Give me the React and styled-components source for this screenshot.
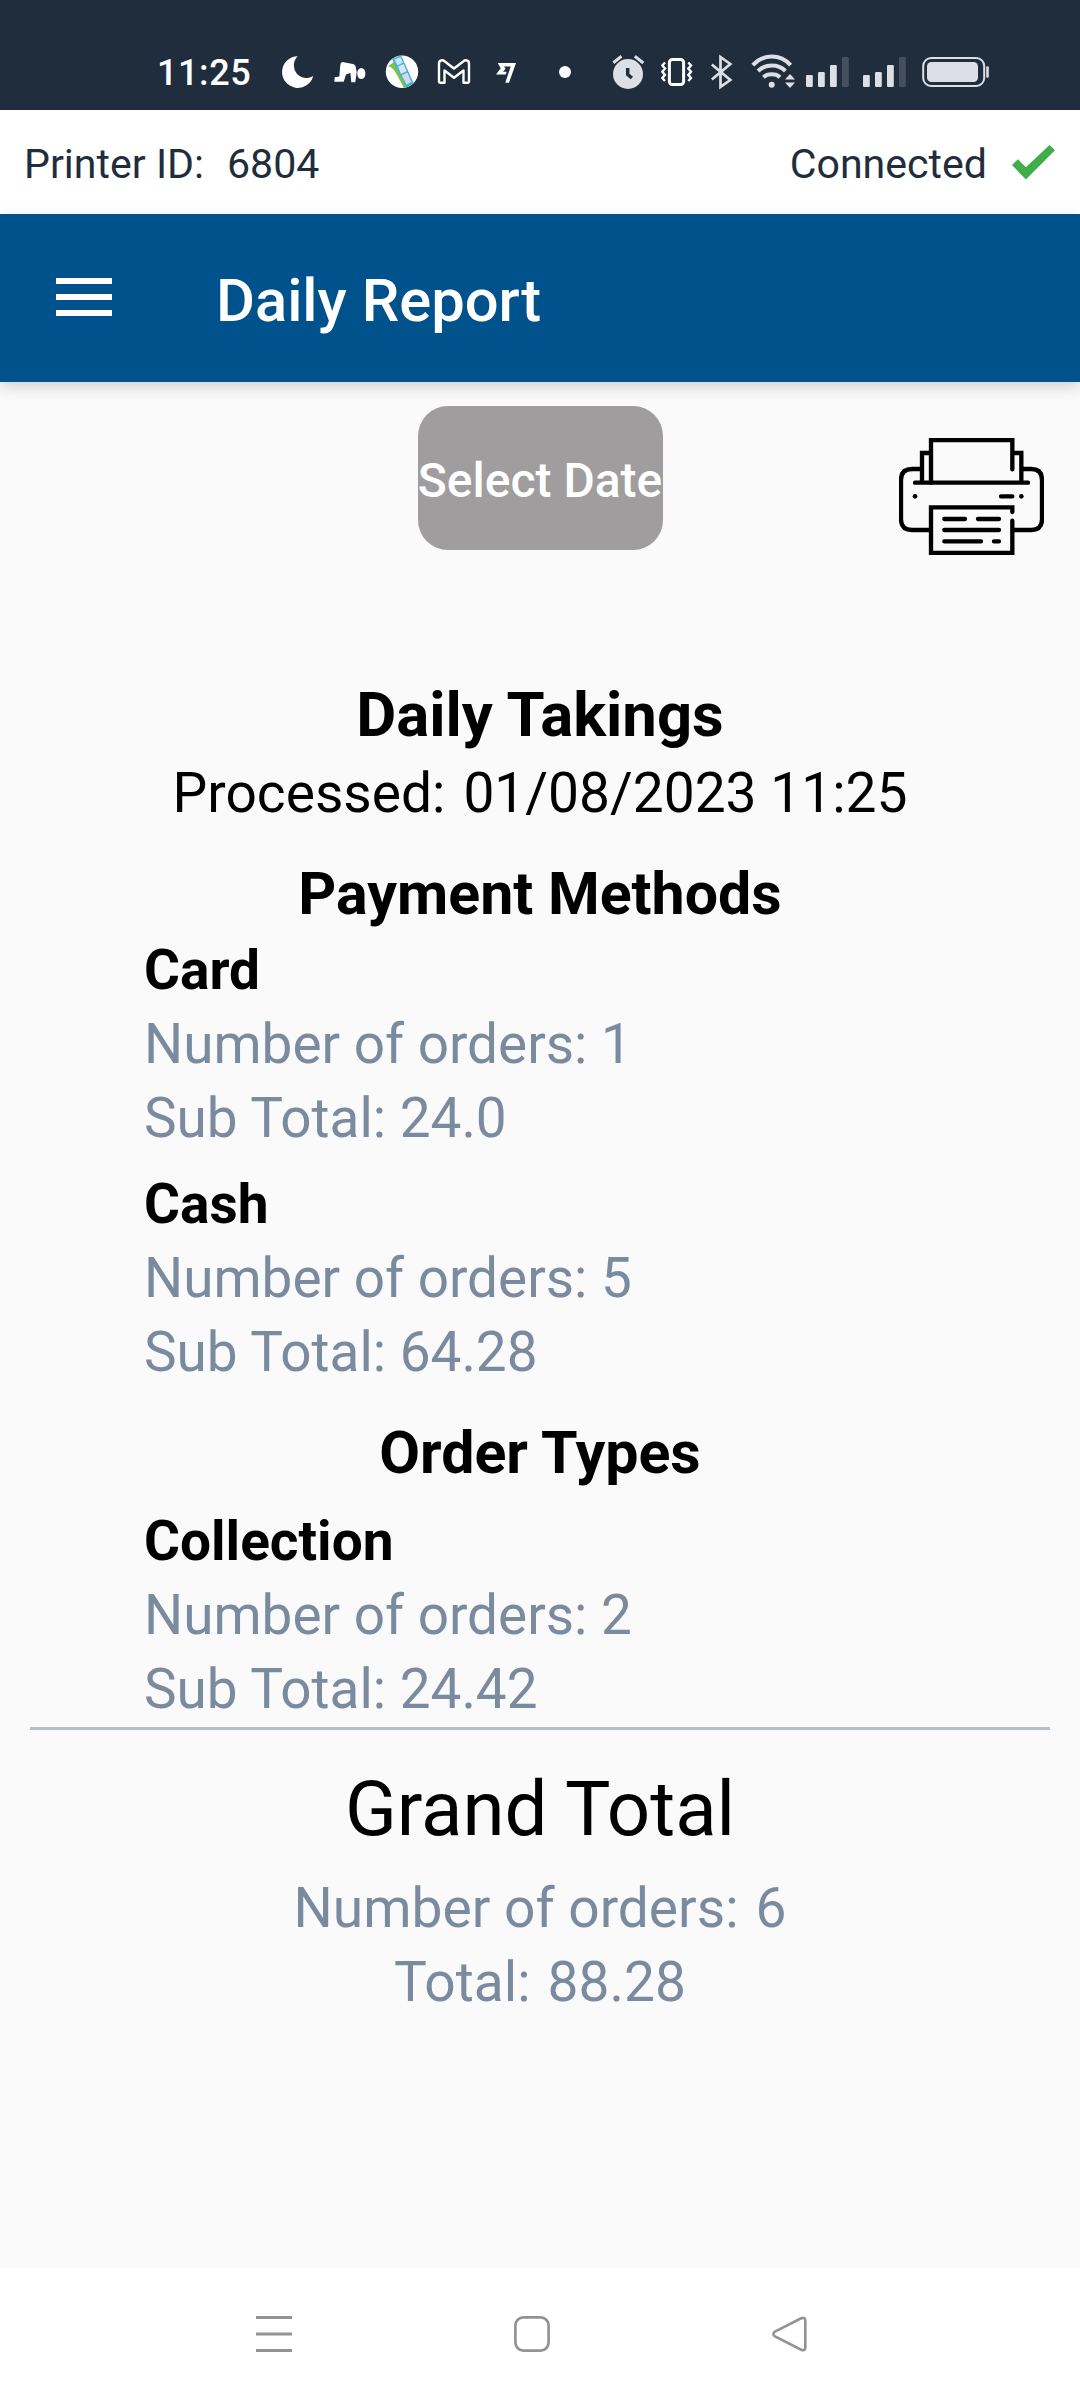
import styled, { createGlobalStyle } from 'styled-components';

const payments = [
  { name: 'Card', orders: '1', total: '24.0' },
  { name: 'Cash', orders: '5', total: '64.28' },
];

const orderTypes = [{ name: 'Collection', orders: '2', total: '24.42' }];

const Signal = ({ gap }) => (
  <StatusIcon $gap={gap} width="43" height="40" viewBox="0 0 43 40" fill="#dcdfe5">
    <rect x="0" y="23" width="6.8" height="12" rx="1.2" />
    <rect x="12" y="20" width="6.8" height="15" rx="1.2" />
    <rect x="24" y="13" width="6.8" height="22" rx="1.2" />
    <rect x="36" y="5" width="6.8" height="30" rx="1.2" fill="#454f60" />
  </StatusIcon>
);

const StatusBar = () => (
  <Status>
    <Clock>11:25</Clock>
    <StatusIcon width="32" height="40" viewBox="0 0 32 40" fill="#fff">
      <path d="M15.7 4.3A15.8 15.8 0 1 0 31.2 24A12.6 12.6 0 0 1 15.7 4.3Z" />
    </StatusIcon>
    <StatusIcon $gap={20} width="32" height="40" viewBox="0 0 32 40" fill="#fff">
      <path d="M8.3 10Q6.6 10.6 6.3 13L5.3 24.5L.7 25.3L.3 29.8H9.7L12 22.5L16.4 21L17.3 30.3H21.3L22.7 19.7L21.5 14Q20.7 12.3 19 12Z" />
      <ellipse cx="27.3" cy="21.5" rx="4.1" ry="5.6" />
    </StatusIcon>
    <StatusIcon $gap={19} width="34" height="40" viewBox="0 0 34 40">
      <defs>
        <clipPath id="map">
          <circle cx="17" cy="19.7" r="16.2" />
        </clipPath>
      </defs>
      <circle cx="17" cy="19.7" r="16.2" fill="#fff" />
      <g clipPath="url(#map)">
        <path d="M3 14L9 10L24 36H19L12 23Q8 15 3 14Z" fill="#7cc342" />
        <path d="M7 7L16 3L29 32L21 35Z" fill="#3fb2dd" />
        <path d="M9.5 7.5L15.5 5L18 10.5L12.5 13.5Z" fill="#c9e6f2" />
        <path d="M13 14.5L18.5 12L21.8 19L16 22Z" fill="#dfe5ec" />
        <path d="M16.7 23.3L22.4 20.5L26.5 30L21.5 32.5Z" fill="#d3dbe4" />
      </g>
    </StatusIcon>
    <StatusIcon $gap={18} width="34" height="40" viewBox="0 0 34 40" fill="none" stroke="#fff" strokeWidth="2.4" strokeLinejoin="round">
      <path d="M3.5 30.8H7.5V18.5L17 25.7L26.5 18.5V30.8H30.5Q32 30.8 32 29.3V11.5Q32 8.5 29 8.3Q27.7 8.2 26.5 9.2L17 16.5L7.5 9.2Q6.3 8.2 5 8.3Q2 8.5 2 11.5V29.3Q2 30.8 3.5 30.8Z" />
    </StatusIcon>
    <StatusIcon $gap={25} width="21" height="40" viewBox="0 0 21 40" fill="#fff">
      <path d="M1.7 11H20L13 30.7H9.3L14.7 14.5H8L9.6 16.7L7 19.7H10.7L9.7 22.5H0L4.7 16.3Z" />
    </StatusIcon>
    <StatusIcon $gap={42} width="12" height="40" viewBox="0 0 12 40" fill="#fff">
      <circle cx="6" cy="20" r="6" />
    </StatusIcon>
    <StatusIcon $gap={41} width="33" height="40" viewBox="0 0 33 40" fill="none" strokeWidth="3">
      <circle cx="16" cy="22" r="15" fill="#dcdfe5" />
      <path d="M1.3 10.7L9.5 4.3M22.8 4.3L31.3 11" stroke="#dcdfe5" />
      <path d="M15.7 16V22.5L19.9 26" stroke="#1f2d3d" strokeWidth="3.5" />
    </StatusIcon>
    <StatusIcon $gap={16} width="32" height="40" viewBox="0 0 32 40" fill="none" stroke="#fff" strokeWidth="2.4">
      <rect x="8.4" y="7.4" width="14.2" height="25.2" rx="3" strokeWidth="3" />
      <path d="M4 10.5L1.3 13.5L4 16.5L1.3 19.7L4 22.9L1.3 26L4 29M27.3 10.5L30 13.5L27.3 16.5L30 19.7L27.3 22.9L30 26L27.3 29" />
    </StatusIcon>
    <StatusIcon $gap={18} width="22" height="40" viewBox="0 0 22 40" fill="none" stroke="#dcdfe5" strokeWidth="2.7">
      <path d="M.8 12.5L19.3 28L9.5 34.8V5L19.3 12L.8 27.5" />
    </StatusIcon>
    <StatusIcon $gap={18} width="45" height="40" viewBox="0 0 45 40" fill="none" stroke="#dcdfe5" strokeWidth="4">
      <path d="M1.8 13.2Q9.5 4.6 20.7 4.6T39.6 13.2M7 19Q12.5 13.6 20.7 13.6T34.4 19M12.4 25.2Q15.5 22.3 20.7 22.3T29 25.2" />
      <circle cx="20.7" cy="32.7" r="3" fill="#dcdfe5" stroke="none" />
      <path d="M34 27.5L39 22L44 27.5ZM34 30.4H44L39 36Z" fill="#dcdfe5" stroke="none" />
    </StatusIcon>
    <Signal gap={10} />
    <Signal gap={14} />
    <StatusIcon $gap={16} width="68" height="40" viewBox="0 0 68 40" fill="#dcdfe5">
      <rect x="1.2" y="6" width="61" height="28" rx="8" fill="none" stroke="#dcdfe5" strokeWidth="2" />
      <rect x="5" y="10" width="51" height="20" rx="4.5" />
      <rect x="64.2" y="14.3" width="2.6" height="11.4" rx="1" />
    </StatusIcon>
  </Status>
);

const Entry = ({ name, orders, total }) => (
  <EntryBlock>
    <EntryName>{name}</EntryName>
    <Detail>Number of orders: {orders}</Detail>
    <Detail>Sub Total: {total}</Detail>
  </EntryBlock>
);

const App = () => {
  return (
    <Screen>
      <GlobalStyle />
      <StatusBar />
      <PrinterBar>
        <PrinterId>
          <span>Printer ID:</span>
          <span>6804</span>
        </PrinterId>
        <Connection>
          <span>Connected</span>
          <svg width="43" height="35" viewBox="0 0 43 35" fill="#3fae49">
            <path d="M0 20L5.9 14.3L13.9 22.2L37.5 0L43 5.3L13.9 34.4Z" />
          </svg>
        </Connection>
      </PrinterBar>
      <AppBar>
        <MenuButton aria-label="Menu">
          <svg width="56" height="38" viewBox="0 0 56 38" fill="#fff">
            <path d="M0 0H56V6H0ZM0 16H56V22H0ZM0 32H56V38H0Z" />
          </svg>
        </MenuButton>
        <Title>Daily Report</Title>
      </AppBar>
      <Content>
        <Actions>
          <SelectDate>Select Date</SelectDate>
          <PrintButton aria-label="Print">
            <svg width="145" height="117" viewBox="27 24 435 351" fill="none" stroke="#000" strokeWidth="13" strokeLinecap="round">
              <path d="M123 158V30H367V118" />
              <path d="M96 156V69H120M370 69H394V156" />
              <path d="M75 158H414" />
              <path d="M94 117H66Q33 117 33 150V268Q33 300 66 300H120M397 117H424Q456 117 456 150V268Q456 300 424 300H370" />
              <path d="M367 246V232H123V369H367V272" />
              <path d="M333 199H367M163 267H225M264 267H327M163 300H327M163 334H273M312 334H327" />
              <circle cx="75" cy="199" r="7" fill="#000" stroke="none" />
              <circle cx="394" cy="199" r="7" fill="#000" stroke="none" />
            </svg>
          </PrintButton>
        </Actions>
        <ReportTitle>Daily Takings</ReportTitle>
        <Processed>
          <span>Processed:</span>
          <span>01/08/2023 11:25</span>
        </Processed>
        <SectionTitle>Payment Methods</SectionTitle>
        <Entries $top={-1}>
          {payments.map((p) => (
            <Entry key={p.name} {...p} />
          ))}
        </Entries>
        <SectionTitle>Order Types</SectionTitle>
        <Entries $top={11}>
          {orderTypes.map((o) => (
            <Entry key={o.name} {...o} />
          ))}
        </Entries>
        <Divider />
        <GrandTotal>Grand Total</GrandTotal>
        <Summary>
          <span>Number of orders:</span>
          <span>6</span>
        </Summary>
        <Summary>
          <span>Total:</span>
          <span>88.28</span>
        </Summary>
      </Content>
      <NavBar>
        <svg width="36" height="36" viewBox="0 0 36 36" stroke="#939393" strokeWidth="3">
          <path d="M0 1.5H36M0 18H36M0 34.5H36" />
        </svg>
        <svg width="36" height="36" viewBox="0 0 36 36" fill="none" stroke="#939393" strokeWidth="2.7">
          <rect x="1.4" y="1.4" width="33.2" height="33.2" rx="8" />
        </svg>
        <svg width="36" height="36" viewBox="0 0 36 36" fill="none" stroke="#939393" strokeWidth="2.6">
          <path d="M2.5 15.9L29.2 2.3Q33.3 .8 33.3 4.5V31.5Q33.3 35.2 29.2 33.7L2.5 20.1Q.3 18 2.5 15.9Z" />
        </svg>
      </NavBar>
    </Screen>
  );
};

const GlobalStyle = createGlobalStyle`
* {
  box-sizing: border-box;
}

body {
  margin: 0;
  font-family: Roboto, sans-serif;
}

h1, h2, h3, p {
  margin: 0;
}

svg {
  display: block;
  flex-shrink: 0;
}

button {
  font-family: inherit;
  border: 0;
  padding: 0;
  background: none;
}
`;

const Screen = styled.div`
display: flex;
flex-direction: column;
width: 1080px;
height: 2400px;
background-color: #fafafa;
`;

const Status = styled.header`
display: flex;
height: 110px;
padding: 52px 0 0 156px;
background-color: #1f2d3d;
`;

const Clock = styled.span`
width: 126px;
padding-left: 1px;
font-size: 36px;
font-weight: 500;
line-height: 43px;
letter-spacing: 0.6px;
color: #fff;
`;

const StatusIcon = styled.svg`
margin-left: ${(props) => props.$gap || 0}px;
`;

const PrinterBar = styled.div`
display: flex;
justify-content: space-between;
height: 104px;
padding: 0 25px 0 24px;
background-color: #fff;
color: #1f2d3d;
font-size: 41.1px;
line-height: 108px;
`;

const PrinterId = styled.div`
display: flex;
gap: 23px;
`;

const Connection = styled.div`
display: flex;
gap: 25px;

svg {
  margin-top: 35px;
}
`;

const AppBar = styled.div`
position: relative;
display: flex;
align-items: center;
height: 168px;
padding-left: 56px;
background-color: #00528c;
box-shadow: 0 5px 14px rgba(0, 0, 0, 0.16);
`;

const MenuButton = styled.button`
margin-right: 104px;
margin-bottom: 2px;
`;

const Title = styled.h1`
font-size: 59.7px;
font-weight: 500;
line-height: 72px;
padding-top: 6px;
color: #fff;
`;

const Content = styled.main`
flex: 1;
padding-top: 24px;
`;

const Actions = styled.div`
display: grid;
grid-template-columns: 1fr auto 1fr;
height: 269px;
align-items: start;
`;

const SelectDate = styled.button`
grid-column: 2;
width: 245px;
height: 144px;
border-radius: 30px;
background-color: #9f9d9e;
color: #fff;
font-size: 48px;
font-weight: 500;
line-height: 56px;
padding-top: 6px;
white-space: nowrap;
`;

const PrintButton = styled.button`
justify-self: end;
margin: 32px 36px 0 0;
`;

const ReportTitle = styled.h2`
font-size: 61.6px;
font-weight: 700;
line-height: 81px;
text-align: center;
`;

const Processed = styled.p`
display: flex;
justify-content: center;
gap: 18px;
font-size: 55.1px;
line-height: 74px;
`;

const SectionTitle = styled.h2`
margin-top: 24px;
font-size: 59.1px;
font-weight: 700;
line-height: 80px;
text-align: center;
`;

const Entries = styled.section`
display: flex;
flex-direction: column;
gap: 12px;
padding-left: 144px;
margin-top: ${(props) => props.$top || 0}px;
`;

const EntryBlock = styled.div`
font-size: 54.9px;
line-height: 74px;
`;

const EntryName = styled.h3`
font-size: 55px;
font-weight: 700;
`;

const Detail = styled.p`
color: #7b8b9f;
`;

const Divider = styled.hr`
height: 3px;
margin: 1px 30px 29px;
border: 0;
background-color: #b5bdc8;
`;

const GrandTotal = styled.h2`
margin-bottom: 12px;
font-size: 76.2px;
font-weight: 400;
line-height: 100px;
text-align: center;
`;

const Summary = styled.p`
display: flex;
justify-content: center;
gap: 17px;
font-size: 55.1px;
line-height: 74px;
color: #7b8b9f;
`;

const NavBar = styled.nav`
display: flex;
align-items: center;
gap: 222px;
height: 132px;
padding-left: 256px;
background-color: #fff;
`;

export default App;
